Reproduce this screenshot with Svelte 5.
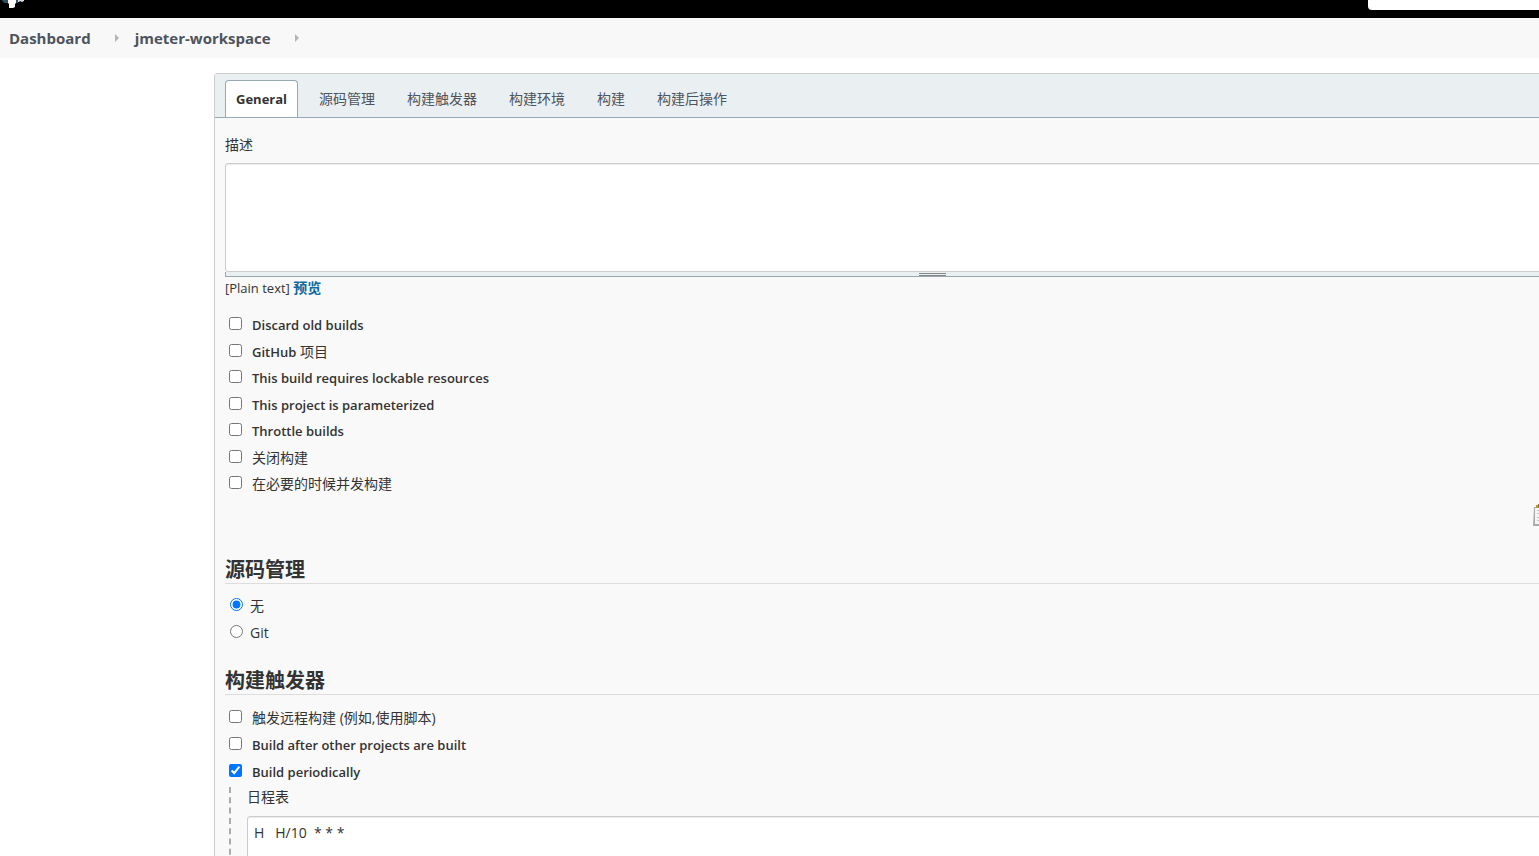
<script>
    const crumbs = ['Dashboard', 'jmeter-workspace'];
    const tabs = ['General', '源码管理', '构建触发器', '构建环境', '构建', '构建后操作'];

    let activeTab = 'General';
    let description = '';
    let scm = 'none';
    let schedule = 'H   H/10  * * *';

    let options = [
        { id: 'discard', text: 'Discard old builds', checked: false },
        { id: 'github', text: 'GitHub', cjk: '项目', checked: false },
        { id: 'lockable', text: 'This build requires lockable resources', checked: false },
        { id: 'params', text: 'This project is parameterized', checked: false },
        { id: 'throttle', text: 'Throttle builds', checked: false },
        { id: 'disable', cjk: '关闭构建', checked: false },
        { id: 'concurrent', cjk: '在必要的时候并发构建', checked: false }
    ];

    let triggers = [
        { id: 'remote', cjk: '触发远程构建 (例如,使用脚本)', checked: false },
        { id: 'after', text: 'Build after other projects are built', checked: false },
        { id: 'periodic', text: 'Build periodically', checked: true }
    ];
</script>

<div class="page">
    <header class="top-bar">
        <svg class="logo" width="28" height="10" viewBox="0 0 28 10" aria-hidden="true">
            <path d="M2 0h6v3H5L3 2z" fill="#335061" />
            <path d="M8 0h8v3l-1 1v3l-2 1H9V4L8 3z" fill="#fff" />
            <path d="M16 0h2v3h-2z" fill="#335061" />
            <path d="M18 0h6v1l-2 1-2-1-1 1h-1z" fill="#ddd" />
        </svg>
        <input class="search" type="search" aria-label="Search" />
    </header>

    <nav class="breadcrumbs">
        {#each crumbs as crumb}
            <a href="#{crumb}">{crumb}</a>
            <svg width="4" height="8" viewBox="0 0 4 8" aria-hidden="true"><path d="M0 0l4 4-4 4z" fill="#b4b4b4" /></svg>
        {/each}
    </nav>

    <main class="config">
        <div class="tab-bar">
            {#each tabs as tab}
                <button type="button" class="tab" class:active={tab === activeTab} on:click={() => activeTab = tab}>{tab}</button>
            {/each}
        </div>

        <div class="body">
            <label class="field-label" for="description">描述</label>
            <textarea id="description" class="description" bind:value={description}></textarea>
            <div class="resizer"><span class="grip"></span></div>
            <div class="format">[Plain text] <a href="#preview">预览</a></div>

            <div class="rows">
                {#each options as option (option.id)}
                    <label class="row">
                        <input type="checkbox" bind:checked={option.checked} />
                        <span>
                            {#if option.text}<span class="latin">{option.text}</span>{/if}
                            {option.cjk || ''}
                        </span>
                    </label>
                {/each}
            </div>

            <div class="advanced">
                <button type="button" class="note-btn" aria-label="Edited">
                    <svg width="24" height="24" viewBox="0 0 24 24">
                        <path d="M1 3h20v19H0z" fill="#aaa" />
                        <path d="M2 4h18v16H2z" fill="#f4f4f4" />
                        <path d="M3 1h15v3H3z" fill="#b39a35" />
                        <path d="M5 0h1v3H5zM9 0h1v3H9zM13 0h1v3h-1z" fill="#81702b" />
                        <path d="M4 6.500h14M4 9.500h14M4 13.500h14M4 16.500h14" stroke="#c5c5c5" />
                    </svg>
                </button>
            </div>

            <h2>源码管理</h2>
            <div class="rows">
                <label class="row radio"><input type="radio" value="none" bind:group={scm} /><span>无</span></label>
                <label class="row radio"><input type="radio" value="git" bind:group={scm} /><span>Git</span></label>
            </div>

            <h2 class="second">构建触发器</h2>
            <div class="rows triggers">
                {#each triggers as trigger (trigger.id)}
                    <label class="row">
                        <input type="checkbox" bind:checked={trigger.checked} />
                        <span>
                            {#if trigger.text}<span class="latin">{trigger.text}</span>{/if}
                            {trigger.cjk || ''}
                        </span>
                    </label>
                {/each}
            </div>

            {#if triggers[2].checked}
                <div class="nested">
                    <label for="schedule">日程表</label>
                    <textarea id="schedule" class="schedule" bind:value={schedule}></textarea>
                </div>
            {/if}
        </div>
    </main>
</div>

<style>
    :global(body) {
        margin: 0;
        background: #fff;
    }

    .page {
        height: 100vh;
        overflow: hidden;
        font: 14px/20px "Open Sans", "Noto Sans CJK SC", sans-serif;
        color: #333;
    }

    .page * {
        box-sizing: border-box;
    }

    button, textarea {
        font: inherit;
        color: inherit;
    }

    .top-bar {
        display: flex;
        align-items: flex-start;
        justify-content: space-between;
        height: 18px;
        background: #000;
    }

    .search {
        width: 171px;
        height: 10px;
        padding: 0;
        border: 0;
        border-radius: 0 0 0 4px;
        background: #fff;
    }

    .breadcrumbs {
        display: flex;
        align-items: center;
        gap: 24px;
        height: 40px;
        padding-left: 9px;
        background: #f8f8f8;
    }

    .breadcrumbs a {
        color: #4d545d;
        font-size: 15px;
        font-weight: 700;
        text-decoration: none;
    }

    .breadcrumbs svg + a {
        margin-left: -8px;
    }

    /* the form is wider than the window and runs off to the right */
    .config {
        margin: 15px -110px 0 214px;
        border: 1px solid #ccc;
        border-radius: 3px;
        background: #f9f9f9;
    }

    .tab-bar {
        display: flex;
        align-items: flex-end;
        gap: 10px;
        height: 44px;
        padding-left: 10px;
        border-bottom: 1px solid #98a8b3;
        background: #eaeff2;
    }

    .tab {
        height: 37px;
        padding: 0 10px;
        border: 1px solid transparent;
        border-bottom: 0;
        border-radius: 4px 4px 0 0;
        background: none;
        color: #4d545d;
        cursor: pointer;
    }

    .tab.active {
        border-color: #98a8b3;
        background: #fff;
        color: #333;
        font-size: 13px;
        font-weight: 700;
    }

    .body {
        padding: 17px 10px 0;
    }

    .field-label {
        display: block;
        height: 28px;
    }

    textarea {
        display: block;
        width: 100%;
        border: 1px solid #ccc;
        border-radius: 3px;
        background: #fff;
        box-shadow: inset 0 1px 1px rgba(0, 0, 0, 0.08);
        resize: none;
        overflow: hidden;
    }

    .description {
        height: 109px;
    }

    .resizer {
        display: flex;
        align-items: center;
        justify-content: center;
        height: 5px;
        border-left: 1px solid #98a8b3;
        border-bottom: 1px solid #98a8b3;
        background: #eaeff2;
    }

    .grip {
        width: 27px;
        height: 3px;
        border: solid #888;
        border-width: 1px 0;
    }

    .format {
        margin: 1px 0 14px;
        font-size: 13px;
    }

    .format a {
        color: #0b6aa2;
        font-size: 14px;
        font-weight: 700;
        text-decoration: none;
    }

    .rows {
        display: grid;
        grid-auto-rows: 26px 27px;
    }

    .row {
        display: flex;
        align-items: center;
        gap: 10px;
        padding-left: 4px;
    }

    .row.radio {
        gap: 7px;
        padding-left: 5px;
    }

    .row input {
        width: 13px;
        height: 13px;
        margin: 0 0 3px;
        accent-color: #0075ff;
    }

    .latin {
        font-size: 13px;
        font-weight: 600;
    }

    .advanced {
        display: flex;
        justify-content: flex-end;
        padding: 7px 81px 0 0;
    }

    .note-btn {
        display: flex;
        padding: 0;
        border: 0;
        background: none;
    }

    h2 {
        height: 28px;
        margin: 28px 0 9px;
        border-bottom: 1px solid #ddd;
        font-size: 20px;
        line-height: 28px;
        font-weight: 700;
    }

    h2.second {
        margin-top: 21px;
    }

    .triggers {
        grid-auto-rows: 27px;
    }

    .nested {
        margin: 2px 0 0 4px;
        padding-left: 16px;
        border-left: 2px dashed #aaa;
    }

    .nested label {
        display: block;
        height: 29px;
    }

    .schedule {
        height: 80px;
        padding: 6px;
    }
</style>
